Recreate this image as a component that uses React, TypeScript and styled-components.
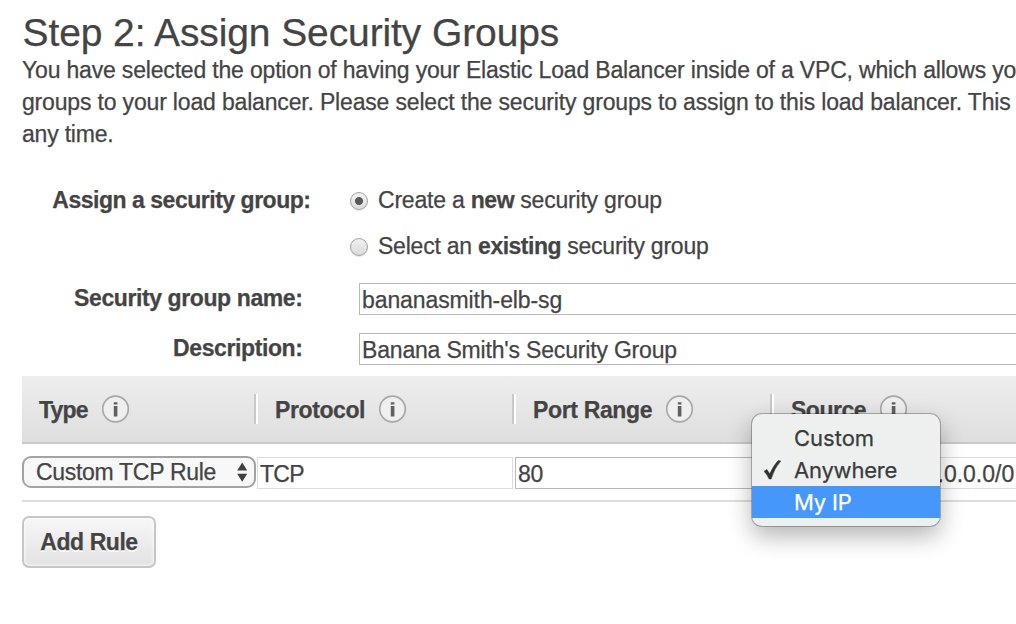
import React from "react";
import styled, { createGlobalStyle } from "styled-components";

const GlobalStyle = createGlobalStyle`
  *, *::before, *::after { box-sizing: border-box; }
  body {
    margin: 0;
    background: #fff;
    color: #444;
    font-family: "Liberation Sans", Arial, sans-serif;
    font-size: 23px;
    -webkit-text-stroke: 0.25px;
    overflow: hidden;
  }
`;

const Page = styled.main`
  width: 1016px;
  height: 624px;
  overflow: hidden;
  padding: 11px 0 0 22px;
`;

const Title = styled.h1`
  margin: 0 0 -1px 0.5px;
  font-size: 39px;
  font-weight: 400;
  line-height: 44px;
  letter-spacing: -0.1px;
  white-space: nowrap;
`;

const Intro = styled.div`
  line-height: 32px;
  height: 96px;
`;

const Line = styled.div<{ $track?: number }>`
  white-space: nowrap;
  letter-spacing: ${(p) => p.$track ?? 0}px;
`;

const Form = styled.form`
  display: flex;
  flex-direction: column;
  padding-top: 34px;
  height: 226px;
`;

const Field = styled.div<{ $height: number }>`
  display: flex;
  align-items: flex-start;
  height: ${(p) => p.$height}px;
  line-height: 32px;
  white-space: nowrap;
`;

const Label = styled.label<{ $end: number; $track?: number }>`
  width: ${(p) => p.$end}px;
  margin-right: ${(p) => 337 - p.$end}px;
  flex: none;
  text-align: right;
  font-weight: 700;
  letter-spacing: ${(p) => p.$track ?? 0}px;
`;

const Option = styled.div<{ $track?: number }>`
  display: flex;
  align-items: center;
  gap: 10px;
  margin-left: -9px;
  letter-spacing: ${(p) => p.$track ?? 0}px;

  b {
    letter-spacing: -0.5px;
  }
`;

const Radio = styled.span<{ $on?: boolean }>`
  width: 18px;
  height: 18px;
  margin-top: 2px;
  border: 1.5px solid #a3a3a3;
  border-radius: 50%;
  box-shadow: 0 1px 1px rgba(0, 0, 0, 0.1);
  background: ${(p) =>
    p.$on
      ? "radial-gradient(circle, #5a5a5a 0 3.6px, transparent 4.4px), linear-gradient(#f4f4f4, #dcdcdc)"
      : "linear-gradient(#f0f0f0, #dadada)"};
`;

const TextBox = styled.div<{ $tone?: string; $width?: number; $track?: number }>`
  flex: ${(p) => (p.$width ? `0 0 ${p.$width}px` : "1")};
  height: 32px;
  border: 1px solid ${(p) => p.$tone ?? "#b9b9b9"};
  padding-left: 2px;
  line-height: 33px;
  white-space: nowrap;
  letter-spacing: ${(p) => p.$track ?? 0}px;
`;

const WideBox = styled(TextBox)`
  margin-top: 1px;
  border-right: 0;
`;

const HeaderRow = styled.div`
  display: flex;
  height: 68px;
  background: linear-gradient(#eee, #dedede);
  border-bottom: 2px solid #c9c9c9;
`;

const HeaderCell = styled.div<{ $width: number; $track?: number }>`
  flex: 0 0 ${(p) => p.$width}px;
  display: flex;
  align-items: center;
  height: 30px;
  margin-top: 18px;
  padding-left: 17px;
  border-right: 2px solid #fff;
  box-shadow: inset -2px 0 #c8c8c8;
  font-weight: 700;
  white-space: nowrap;
  letter-spacing: ${(p) => p.$track ?? 0}px;
`;

const HeaderText = styled.span`
  line-height: 30px;
  padding-top: 2px;
  margin-right: 14px;
`;

const RuleRow = styled.div`
  display: flex;
  height: 58px;
  padding-top: 12px;
  border-bottom: 2px solid #ddd;
`;

const Select = styled.div`
  flex: 0 0 234px;
  height: 32px;
  margin-right: 1px;
  padding: 0 6px 0 12px;
  display: flex;
  align-items: center;
  justify-content: space-between;
  border: 2px solid #a3a3a3;
  border-radius: 9px;
  background: #f8f8f8;
  line-height: 28px;
  white-space: nowrap;
  letter-spacing: -0.3px;
`;

const Cells = styled.div`
  display: flex;
  gap: 2px;
  flex: 1;
  padding-top: 1px;
`;

const SourceBox = styled(WideBox)`
  margin-top: 0;
  padding-left: 163.5px;
`;

const AddButton = styled.button`
  display: block;
  width: 134px;
  height: 52px;
  margin-top: 14px;
  padding: 0;
  border: 2px solid #c6c6c6;
  border-radius: 7px;
  background: linear-gradient(#f7f7f7, #e2e2e2);
  box-shadow: inset 0 0 3px 1px rgba(255, 255, 255, 0.7);
  color: #444;
  font: 700 23px "Liberation Sans", Arial, sans-serif;
  letter-spacing: -0.45px;
  text-shadow: 0 2px 0 #fff;
`;

const Menu = styled.ul`
  position: absolute;
  left: 752px;
  top: 414px;
  width: 188px;
  height: 112px;
  margin: 0;
  padding: 8px 0;
  list-style: none;
  border-radius: 10px;
  background: #eef0f0;
  box-shadow: 0 0 0 1px rgba(0, 0, 0, 0.26), 0 10px 24px rgba(0, 0, 0, 0.3);
  font-family: Inter, sans-serif;
  font-size: 22px;
  color: #3a3c3c;
`;

const MenuItem = styled.li<{ $active?: boolean; $track?: number }>`
  display: grid;
  grid-template-columns: 30px 1fr;
  align-items: center;
  height: 32px;
  padding-left: 12px;
  line-height: 32px;
  white-space: nowrap;
  letter-spacing: ${(p) => p.$track ?? 0}px;
  background: ${(p) => (p.$active ? "#4697fb" : "transparent")};
  color: ${(p) => (p.$active ? "#fff" : "inherit")};
`;

const MenuText = styled.span`
  grid-column: 2;
  grid-row: 1;
`;

const InfoIcon = () => (
  <svg width="28" height="28" viewBox="0 0 28 28">
    <circle cx="13.5" cy="14" r="12.8" fill="#efefef" stroke="#a8a8a8" strokeWidth="1.7" />
    <path d="M11.8 7.2h3.6v2.2h-3.6zM11.8 11h3.6v10.6h-3.6z" fill="#606060" />
  </svg>
);

const Arrows = () => (
  <svg width="11" height="20" viewBox="0 0 11 20">
    <path d="M5.2 0.5L10.2 8.5H0.2zM5.2 19.7L0.2 11.7H10.2z" fill="#404040" />
  </svg>
);

const Check = () => (
  <svg width="17" height="20" viewBox="0 0 17 20">
    <path d="M0 11.3L2.8 9.4L5.8 13.8Q9.5 5.5 14.2.6L16.8 1Q10.3 8.2 7.2 19H5.1Q3.2 14.6 0 11.3z" fill="#303232" stroke="#303232" strokeWidth="0.5" />
  </svg>
);

const columns = [
  { name: "Type", width: 236, track: -0.8 },
  { name: "Protocol", width: 258, track: -0.4 },
  { name: "Port Range", width: 258, track: -0.35 },
  { name: "Source", width: 258, track: -0.5 },
];

export default function App() {
  return (
    <>
      <GlobalStyle />
      <Page>
        <Title>Step 2: Assign Security Groups</Title>
        <Intro>
          <Line $track={-0.18}>You have selected the option of having your Elastic Load Balancer inside of a VPC, which allows you</Line>
          <Line $track={-0.17}>groups to your load balancer. Please select the security groups to assign to this load balancer. This</Line>
          <Line $track={-0.2}>any time.</Line>
        </Intro>
        <Form>
          <Field $height={46}>
            <Label $end={288.5} $track={-0.48}>Assign a security group:</Label>
            <Option $track={-0.2}>
              <Radio $on />
              <span>Create a <b>new</b> security group</span>
            </Option>
          </Field>
          <Field $height={52}>
            <Label $end={289} />
            <Option $track={-0.22}>
              <Radio />
              <span>Select an <b>existing</b> security group</span>
            </Option>
          </Field>
          <Field $height={50}>
            <Label $end={280.5} $track={-0.4}>Security group name:</Label>
            <WideBox $track={-0.1}>bananasmith-elb-sg</WideBox>
          </Field>
          <Field $height={40}>
            <Label $end={280.5} $track={-0.4}>Description:</Label>
            <WideBox $track={-0.18}>Banana Smith's Security Group</WideBox>
          </Field>
        </Form>
        <HeaderRow>
          {columns.map((c) => (
            <HeaderCell key={c.name} $width={c.width} $track={c.track}>
              <HeaderText>{c.name}</HeaderText>
              <InfoIcon />
            </HeaderCell>
          ))}
        </HeaderRow>
        <RuleRow>
          <Select>
            Custom TCP Rule
            <Arrows />
          </Select>
          <Cells>
            <TextBox $tone="#ddd" $width={256} $track={-0.7}>TCP</TextBox>
            <TextBox $width={256} $track={-0.2}>80</TextBox>
            <SourceBox $tone="#ddd">.0.0.0/0</SourceBox>
          </Cells>
        </RuleRow>
        <AddButton>Add Rule</AddButton>
      </Page>
      <Menu>
        <MenuItem><MenuText>Custom</MenuText></MenuItem>
        <MenuItem $track={-0.2}><Check /><MenuText>Anywhere</MenuText></MenuItem>
        <MenuItem $active $track={-0.2}><MenuText>My IP</MenuText></MenuItem>
      </Menu>
    </>
  );
}
